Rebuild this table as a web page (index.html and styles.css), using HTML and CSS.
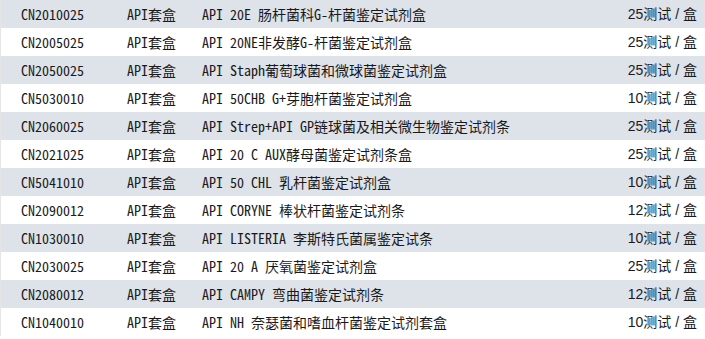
FILE: index.html
```html
<!DOCTYPE html>
<html lang="zh-CN">
<head>
<meta charset="utf-8">
<title>API套盒</title>
<link rel="stylesheet" href="styles.css">
</head>
<body>
<div class="list">
  <div class="row odd"><span class="code">CN2010025</span><span class="kit">API套盒</span><span class="name">API 20E 肠杆菌科G-杆菌鉴定试剂盒</span><span class="spec">25测试 / 盒</span></div>
  <div class="row"><span class="code">CN2005025</span><span class="kit">API套盒</span><span class="name">API 20NE非发酵G-杆菌鉴定试剂盒</span><span class="spec">25测试 / 盒</span></div>
  <div class="row odd"><span class="code">CN2050025</span><span class="kit">API套盒</span><span class="name">API Staph葡萄球菌和微球菌鉴定试剂盒</span><span class="spec">25测试 / 盒</span></div>
  <div class="row"><span class="code">CN5030010</span><span class="kit">API套盒</span><span class="name">API 50CHB G+芽胞杆菌鉴定试剂盒</span><span class="spec">10测试 / 盒</span></div>
  <div class="row odd"><span class="code">CN2060025</span><span class="kit">API套盒</span><span class="name">API Strep+API GP链球菌及相关微生物鉴定试剂条</span><span class="spec">25测试 / 盒</span></div>
  <div class="row"><span class="code">CN2021025</span><span class="kit">API套盒</span><span class="name">API 20 C AUX酵母菌鉴定试剂条盒</span><span class="spec">25测试 / 盒</span></div>
  <div class="row odd"><span class="code">CN5041010</span><span class="kit">API套盒</span><span class="name">API 50 CHL 乳杆菌鉴定试剂盒</span><span class="spec">10测试 / 盒</span></div>
  <div class="row"><span class="code">CN2090012</span><span class="kit">API套盒</span><span class="name">API CORYNE 棒状杆菌鉴定试剂条</span><span class="spec">12测试 / 盒</span></div>
  <div class="row odd"><span class="code">CN1030010</span><span class="kit">API套盒</span><span class="name">API LISTERIA 李斯特氏菌属鉴定试条</span><span class="spec">10测试 / 盒</span></div>
  <div class="row"><span class="code">CN2030025</span><span class="kit">API套盒</span><span class="name">API 20 A 厌氧菌鉴定试剂盒</span><span class="spec">25测试 / 盒</span></div>
  <div class="row odd"><span class="code">CN2080012</span><span class="kit">API套盒</span><span class="name">API CAMPY 弯曲菌鉴定试剂条</span><span class="spec">12测试 / 盒</span></div>
  <div class="row"><span class="code">CN1040010</span><span class="kit">API套盒</span><span class="name">API NH 奈瑟菌和嗜血杆菌鉴定试剂套盒</span><span class="spec">10测试 / 盒</span></div>
</div>
</body>
</html>
```
FILE: styles.css
```css
html, body {
  margin: 0;
  padding: 0;
  background: #ffffff;
}
.list {
  border-left: 1px solid #e6e6e6;
  width: 704px;
}
.row {
  display: grid;
  grid-template-columns: 106px 75px 1fr auto;
  align-items: center;
  height: 28px;
  padding: 0 8px 0 20px;
  background: #ffffff;
  color: #1a1a1a;
  font-family: "Noto Sans Mono CJK SC", "Noto Sans CJK SC", monospace;
  font-size: 14px;
  line-height: 28px;
  white-space: nowrap;
}
.row.odd {
  background: #dee2e9;
}
.spec {
  font-family: "Liberation Sans", "Noto Sans CJK SC", sans-serif;
  font-size: 14px;
  text-align: right;
}
```
